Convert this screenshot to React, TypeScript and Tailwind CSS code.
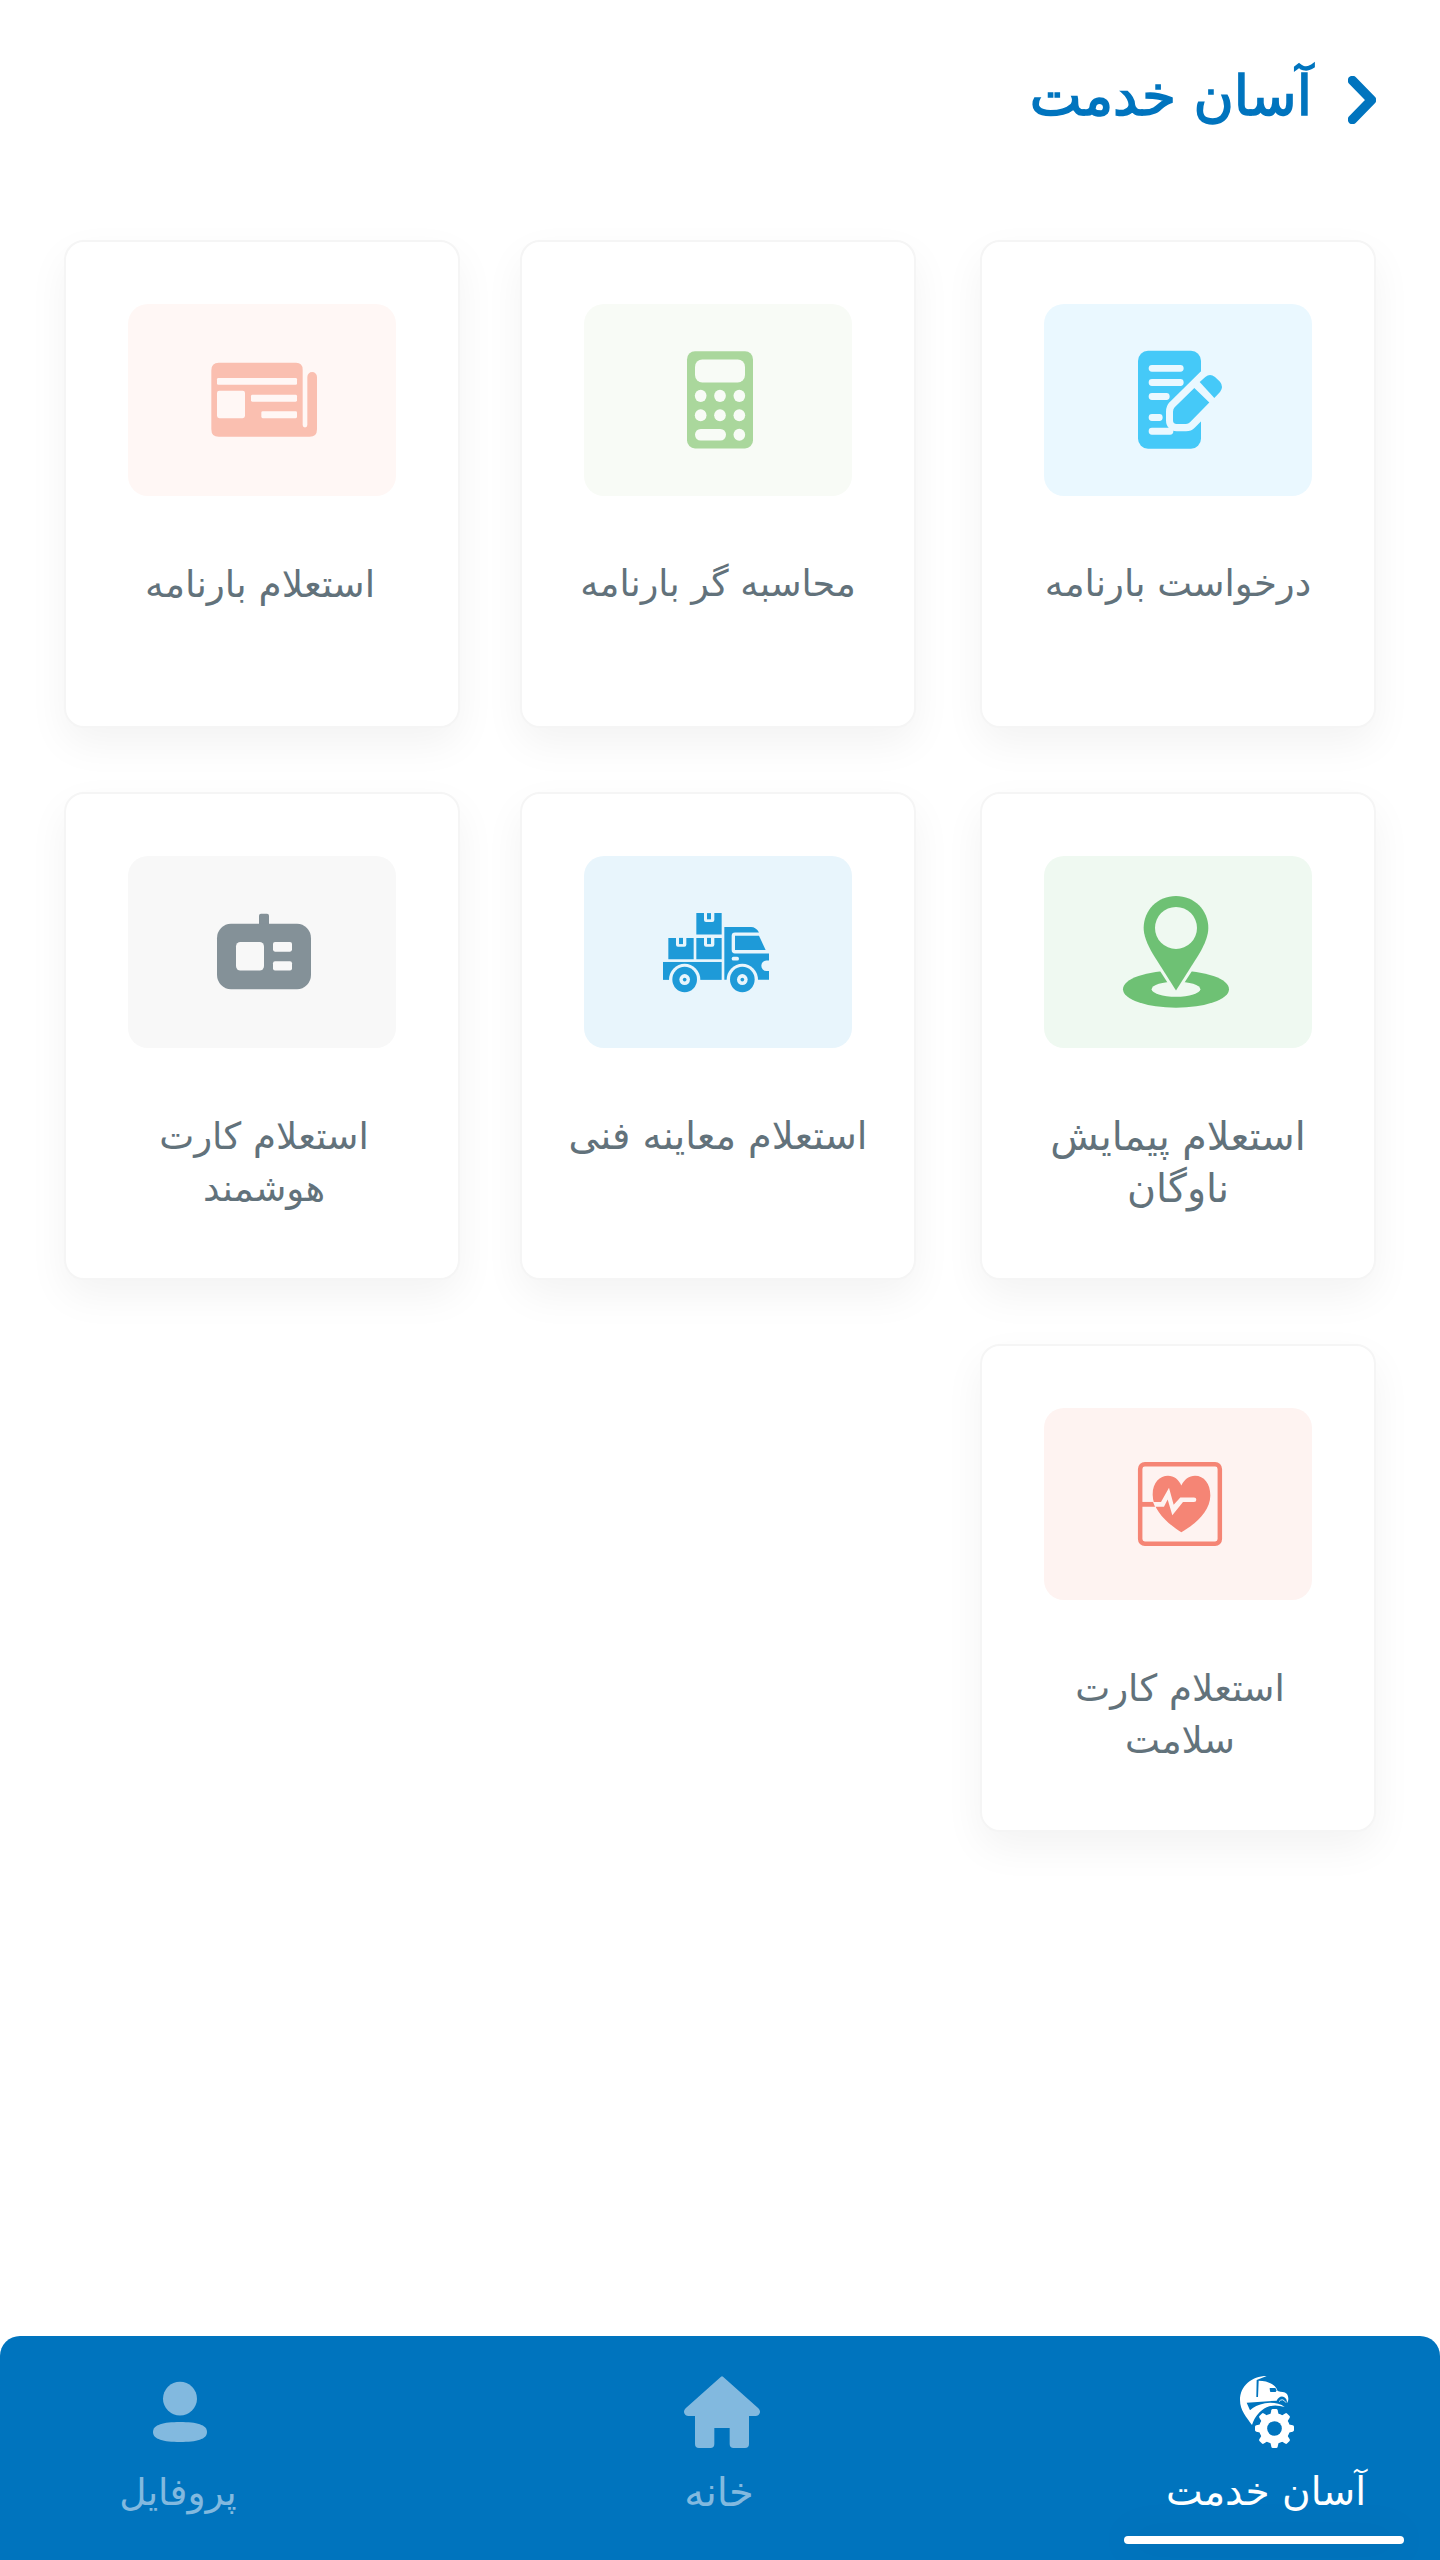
import React from "react";

interface ServiceCardProps {
  title: string;
  tileClass: string;
  textClass: string;
  children: React.ReactNode;
}

const ServiceCard: React.FC<ServiceCardProps> = ({
  title,
  tileClass,
  textClass,
  children,
}) => {
  return (
    <div className="flex flex-col items-center w-[396px] h-[488px] pt-[62px] bg-white border-2 border-[#f5f5f5] rounded-[20px] shadow-[0_16px_40px_rgba(0,0,0,0.05)]">
      <div className={`w-[268px] h-[192px] shrink-0 rounded-[20px] overflow-hidden ${tileClass}`}>
        {children}
      </div>
      <div
        className={`mt-[62px] text-center whitespace-pre leading-[52px] text-[#62727b] ${textClass}`}
      >
        {title}
      </div>
    </div>
  );
};

interface TileIconProps {
  viewBox: string;
  fill: string;
  children: React.ReactNode;
}

const TileIcon: React.FC<TileIconProps> = ({ viewBox, fill, children }) => (
  <svg viewBox={viewBox} preserveAspectRatio="none" className="block w-full h-full" fill={fill}>
    {children}
  </svg>
);

const RequestIcon = () => (
  <TileIcon viewBox="222 215 804 558" fill="#45c9f8">
    <rect x="504" y="351" width="189" height="285" rx="30" />
    <path
      d="M546 402H631M546 443H631M546 484H589M546 545H568M546 585H600"
      stroke="#eaf8ff"
      strokeWidth="20"
      strokeLinecap="round"
    />
    <path
      d="M706 427L614 515Q609 520 609 528V553Q609 564 620 564H648Q655 564 660 559L750 471L735 427Z"
      fill="#eaf8ff"
      stroke="#eaf8ff"
      strokeWidth="42"
      strokeLinejoin="round"
    />
    <path d="M673 459L718 501L660 559Q655 564 648 564H620Q609 564 609 553V528Q609 520 614 515Z" />
    <path d="M689 442L706 427Q720 415 735 427L750 441Q762 456 750 471L733 488Z" />
  </TileIcon>
);

const CalculatorIcon = () => (
  <TileIcon viewBox="222 215 804 558" fill="#f8fbf6">
    <rect x="531" y="352" width="198" height="283" rx="24" fill="#aad79c" />
    <rect x="555" y="376" width="150" height="67" rx="22" />
    <circle cx="572" cy="482" r="17.5" />
    <circle cx="630" cy="482" r="17.5" />
    <circle cx="688" cy="482" r="17.5" />
    <circle cx="572" cy="538.5" r="17.5" />
    <circle cx="630" cy="538.5" r="17.5" />
    <circle cx="688" cy="538.5" r="17.5" />
    <rect x="555" y="578" width="93" height="34" rx="17" />
    <circle cx="688" cy="595" r="17.5" />
  </TileIcon>
);

const WaybillIcon = () => (
  <TileIcon viewBox="234 215 804 558" fill="#fff7f5">
    <path
      d="M506 386H738Q758 386 758 406V567A7 7 0 0 0 772 567V427A14.500 14.500 0 0 1 801 427V579Q801 601 779 601H506Q484 601 484 579V408Q484 386 506 386Z"
      fill="#fabfb0"
    />
    <rect x="501" y="430" width="240" height="20" rx="4" />
    <rect x="501" y="467" width="84" height="80" rx="7" />
    <rect x="603" y="479" width="138" height="20" rx="4" />
    <rect x="634" y="527" width="107" height="20" rx="4" />
  </TileIcon>
);

const LocationIcon = () => (
  <TileIcon viewBox="222 221 804 558" fill="#6ec174">
    <ellipse cx="618" cy="608" rx="159" ry="54" />
    <ellipse cx="618" cy="608" rx="73" ry="22" fill="#eff9f1" />
    <path d="M560 540H676L618 627Z" fill="#eff9f1" />
    <path d="M618 612L550 508C530 475 521 450 521 430C521 378 563 337 618 337S715 378 715 430C715 450 706 475 686 508Z" />
    <ellipse cx="618" cy="430" rx="63" ry="61" fill="#eff9f1" />
  </TileIcon>
);

const Box = ({ x, y }: { x: number; y: number }) => (
  <g transform={`translate(${x} ${y})`}>
    <path d="M0 0H23V20Q23 26 29 26H48Q54 26 54 20V0H76V62H0Z" />
    <rect x="32" width="12" height="18" />
  </g>
);

const Wheel = ({ x }: { x: number }) => (
  <g>
    <circle cx={x} cy="581" r="47" fill="#e8f5fc" />
    <circle cx={x} cy="580" r="37" />
    <circle cx={x} cy="580" r="16" fill="#e8f5fc" />
    <circle cx={x} cy="580" r="5.500" />
  </g>
);

const TruckIcon = () => (
  <TileIcon viewBox="222 221 804 558" fill="#1e9ad8">
    <Box x={559} y={387} />
    <Box x={475} y={459} />
    <Box x={559} y={459} />
    <rect x="459" y="529" width="176" height="52" />
    <path d="M643 427H723Q738 427 747 443H675Q665 443 665 453V494Q665 504 675 504H777V525H769A15 15 0 0 0 769 555H777V581H643Z" />
    <path d="M675 453H747L767 494H675Z" />
    <rect x="665" y="514" width="22" height="11" rx="5.500" fill="#e8f5fc" />
    <Wheel x={524} />
    <Wheel x={697} />
  </TileIcon>
);

const SmartCardIcon = () => (
  <TileIcon viewBox="234 221 804 558" fill="#849198">
    <rect x="627" y="389" width="30" height="40" rx="6" />
    <rect x="501" y="418" width="282" height="190" rx="42" />
    <rect x="558" y="471" width="84" height="83" rx="13" fill="#f8f8f8" />
    <rect x="669" y="471" width="57" height="28" rx="6" fill="#f8f8f8" />
    <rect x="669" y="527" width="57" height="27" rx="6" fill="#f8f8f8" />
  </TileIcon>
);

const HealthIcon = () => (
  <TileIcon viewBox="222 226 804 558" fill="#f58575">
    <rect
      x="510.500"
      y="389.500"
      width="239"
      height="231"
      rx="14"
      fill="none"
      stroke="#f58575"
      strokeWidth="13.500"
    />
    <rect x="515" y="499" width="40" height="14" />
    <path d="M634 587C598 566 548 525 548 478C548 442 570 423 594 423C612 423 626 434 634 451C643 434 657 423 675 423C702 423 721 446 721 480C721 528 670 567 634 587Z" />
    <path
      d="M549 499H573L597 458L611 507L631 486H672Q679 486 679 492.500T672 499H639L607 538L593 492L582 513H555Z"
      fill="#fef3f1"
    />
  </TileIcon>
);

const ServiceNavIcon = () => (
  <svg viewBox="372 168 240 216" className="w-20 h-[72px]" fill="#fff">
    <path d="M500 168C455 168 420 198 420 240C420 272 440 292 456 315C464 290 480 272 500 262C518 254 536 256 554 261C540 250 515 246 495 250C475 254 460 262 450 271L440 248L530 242C534 232 545 226 553 232C560 236 561 243 561 249C567 242 566 228 560 221C554 215 544 217 533 213C527 193 503 182 476 182L474 231H469L470 180Z" />
    <path d="M509 204H526L530 211L527 216H511Q509 211 509 204Z" fill="#0074be" />
    <path d="M537 245Q547 232 558 248" fill="none" stroke="#fff" strokeWidth="2.500" />
    <circle cx="523.500" cy="325.500" r="46" />
    {[0, 45, 90, 135, 180, 225, 270, 315].map((angle) => (
      <path
        key={angle}
        d="M511 285L514 271Q515 267 518 267H529Q532 267 533 271L536 285Z"
        transform={`rotate(${angle} 523.5 325.5)`}
      />
    ))}
    <circle cx="523.500" cy="325.500" r="22" fill="#0074be" />
  </svg>
);

const HomeNavIcon = () => (
  <svg viewBox="126 168 240 216" className="w-20 h-[72px]" fill="#82b9df">
    <path d="M243 170Q246 167 249 170L355 265Q361 271 360 277Q358 288 346 288H327V372Q327 384 315 384H281Q269 384 269 372V324H223V372Q223 384 211 384H177Q165 384 165 372V288H146Q134 288 132 277Q131 271 137 265Z" />
  </svg>
);

const ProfileNavIcon = () => (
  <svg viewBox="420 168 240 216" className="w-20 h-[72px]" fill="#82b9df">
    <ellipse cx="540" cy="236" rx="51" ry="50.500" />
    <path d="M540 306C590 306 621 314 621 336S590 366 540 366S459 358 459 336S490 306 540 306Z" />
  </svg>
);

const services = [
  { title: "درخواست بارنامه", tile: "bg-[#eaf8ff]", text: "text-[37px]", icon: <RequestIcon /> },
  { title: "محاسبه گر بارنامه", tile: "bg-[#f8fbf6]", text: "text-[36.5px]", icon: <CalculatorIcon /> },
  { title: "استعلام بارنامه", tile: "bg-[#fff7f5]", text: "text-[37.4px] pr-1", icon: <WaybillIcon /> },
  { title: "استعلام پیمایش\nناوگان", tile: "bg-[#eff9f1]", text: "text-[39.6px]", icon: <LocationIcon /> },
  { title: "استعلام معاینه فنی", tile: "bg-[#e8f5fc]", text: "text-[38.3px]", icon: <TruckIcon /> },
  { title: "استعلام کارت\nهوشمند", tile: "bg-[#f8f8f8]", text: "text-[37.2px] pl-1", icon: <SmartCardIcon /> },
  { title: "استعلام کارت\nسلامت", tile: "bg-[#fef3f1]", text: "text-[37.2px] pl-1", icon: <HealthIcon /> },
];

interface NavItemProps {
  label: string;
  icon: React.ReactNode;
  textClass: string;
  active?: boolean;
}

const NavItem: React.FC<NavItemProps> = ({ label, icon, textClass, active }) => (
  <div className="flex flex-col items-center w-[280px] h-full pt-10">
    {icon}
    <div className={`mt-5 h-12 leading-[48px] whitespace-nowrap ${textClass}`}>
      {label}
    </div>
    {active && (
      <div className="w-full h-2 mt-5 bg-white rounded-full shadow-[0_0_40px_rgba(0,0,0,0.1)]" />
    )}
  </div>
);

export default function App() {
  return (
    <div
      dir="rtl"
      className="flex flex-col w-[1440px] h-[2560px] overflow-hidden bg-white font-['DejaVu_Sans',sans-serif]"
    >
      <header className="flex h-[240px] px-16 pt-[68px]">
        <svg viewBox="0 0 28 48" className="w-7 h-12 mt-2" fill="none">
          <path
            d="M4.500 4.500L23.500 24L4.500 43.500"
            stroke="#0074be"
            strokeWidth="9.500"
            strokeLinecap="round"
            strokeLinejoin="round"
          />
        </svg>
        <h1 className="mr-9 text-[55px] leading-[56px] font-normal text-[#0074be] [-webkit-text-stroke:1.6px_#0074be]">
          آسان خدمت
        </h1>
      </header>

      <main className="grid flex-1 grid-cols-[396px_400px_396px] content-start justify-items-end gap-x-[60px] gap-y-16 px-16">
        {services.map((service) => (
          <ServiceCard
            key={service.title}
            title={service.title}
            tileClass={service.tile}
            textClass={service.text}
          >
            {service.icon}
          </ServiceCard>
        ))}
      </main>

      <nav className="flex justify-between h-56 pr-9 pl-10 overflow-hidden rounded-t-[20px] bg-[#0074be]">
        <NavItem
          label="آسان خدمت"
          icon={<ServiceNavIcon />}
          textClass="text-[39px] pl-1 text-white"
          active
        />
        <NavItem
          label="خانه"
          icon={<HomeNavIcon />}
          textClass="text-[40px] pr-1.5 text-[#82b9df]"
        />
        <NavItem
          label="پروفایل"
          icon={<ProfileNavIcon />}
          textClass="text-[37.5px] pr-1 text-[#82b9df]"
        />
      </nav>
    </div>
  );
}
